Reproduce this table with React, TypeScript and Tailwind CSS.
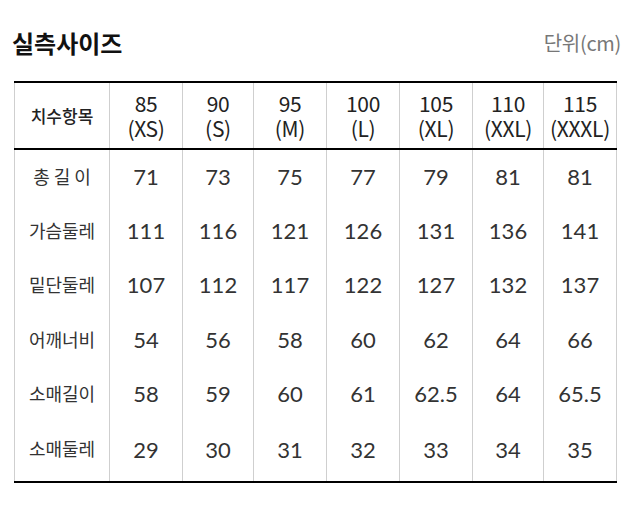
const sizes = [
  ["85", "(XS)"],
  ["90", "(S)"],
  ["95", "(M)"],
  ["100", "(L)"],
  ["105", "(XL)"],
  ["110", "(XXL)"],
  ["115", "(XXXL)"],
];

const rows: [string, string[]][] = [
  ["총 길 이", ["71", "73", "75", "77", "79", "81", "81"]],
  ["가슴둘레", ["111", "116", "121", "126", "131", "136", "141"]],
  ["밑단둘레", ["107", "112", "117", "122", "127", "132", "137"]],
  ["어깨너비", ["54", "56", "58", "60", "62", "64", "66"]],
  ["소매길이", ["58", "59", "60", "61", "62.5", "64", "65.5"]],
  ["소매둘레", ["29", "30", "31", "32", "33", "34", "35"]],
];

const kr = "font-['Noto_Sans_CJK_KR',sans-serif]";

export default function App() {
  return (
    <div className="w-[635px] h-[509px] bg-white pt-[27px]">
      <div className="flex items-center justify-between pl-[12px] pr-[14px] h-[32px]">
        <h1 className={`${kr} text-[24px] font-bold text-[#111] tracking-[0px]`}>실측사이즈</h1>
        <span className={`${kr} text-[20px] text-[#777] tracking-[-0.3px]`}>단위(cm)</span>
      </div>

      <table className="ml-[14px] mt-[22px] w-[602px] table-fixed border-collapse">
        <colgroup>
          <col className="w-[95px]" />
          <col className="w-[73px]" />
          <col className="w-[71px]" />
          <col className="w-[73px]" />
          <col className="w-[73px]" />
          <col className="w-[73px]" />
          <col className="w-[71px]" />
          <col className="w-[73px]" />
        </colgroup>
        <thead>
          <tr className="h-[67px] border-t-[2px] border-t-black border-b-[2px] border-b-black">
            <th className={`${kr} text-[17px] font-medium text-[#222] border-l border-r border-[#cfcfcf]`}>
              치수항목
            </th>
            {sizes.map(([n, s]) => (
              <th
                key={n}
                className={`${kr} text-[21px] font-normal leading-[25px] text-[#222] tracking-[-0.3px] border-r border-[#cfcfcf]`}
              >
                <div>{n}</div>
                <div>{s}</div>
              </th>
            ))}
          </tr>
        </thead>
        <tbody className="border-b-[2px] border-b-black">
          {rows.map(([label, vals], i) => (
            <tr key={label} className={i === rows.length - 1 ? "h-[61px] align-top" : "h-[54.4px]"}>
              <td
                className={`${kr} text-[18px] text-[#333] text-center border-l border-r border-[#cfcfcf] whitespace-pre ${
                  i === rows.length - 1 ? "pt-[14px]" : ""
                }`}
              >
                {label}
              </td>
              {vals.map((v, j) => (
                <td
                  key={j}
                  className={`font-['Lato',sans-serif] text-[22px] text-[#333] text-center border-r border-[#cfcfcf] ${
                    i === rows.length - 1 ? "pt-[12px]" : ""
                  }`}
                >
                  {v}
                </td>
              ))}
            </tr>
          ))}
        </tbody>
      </table>
    </div>
  );
}
